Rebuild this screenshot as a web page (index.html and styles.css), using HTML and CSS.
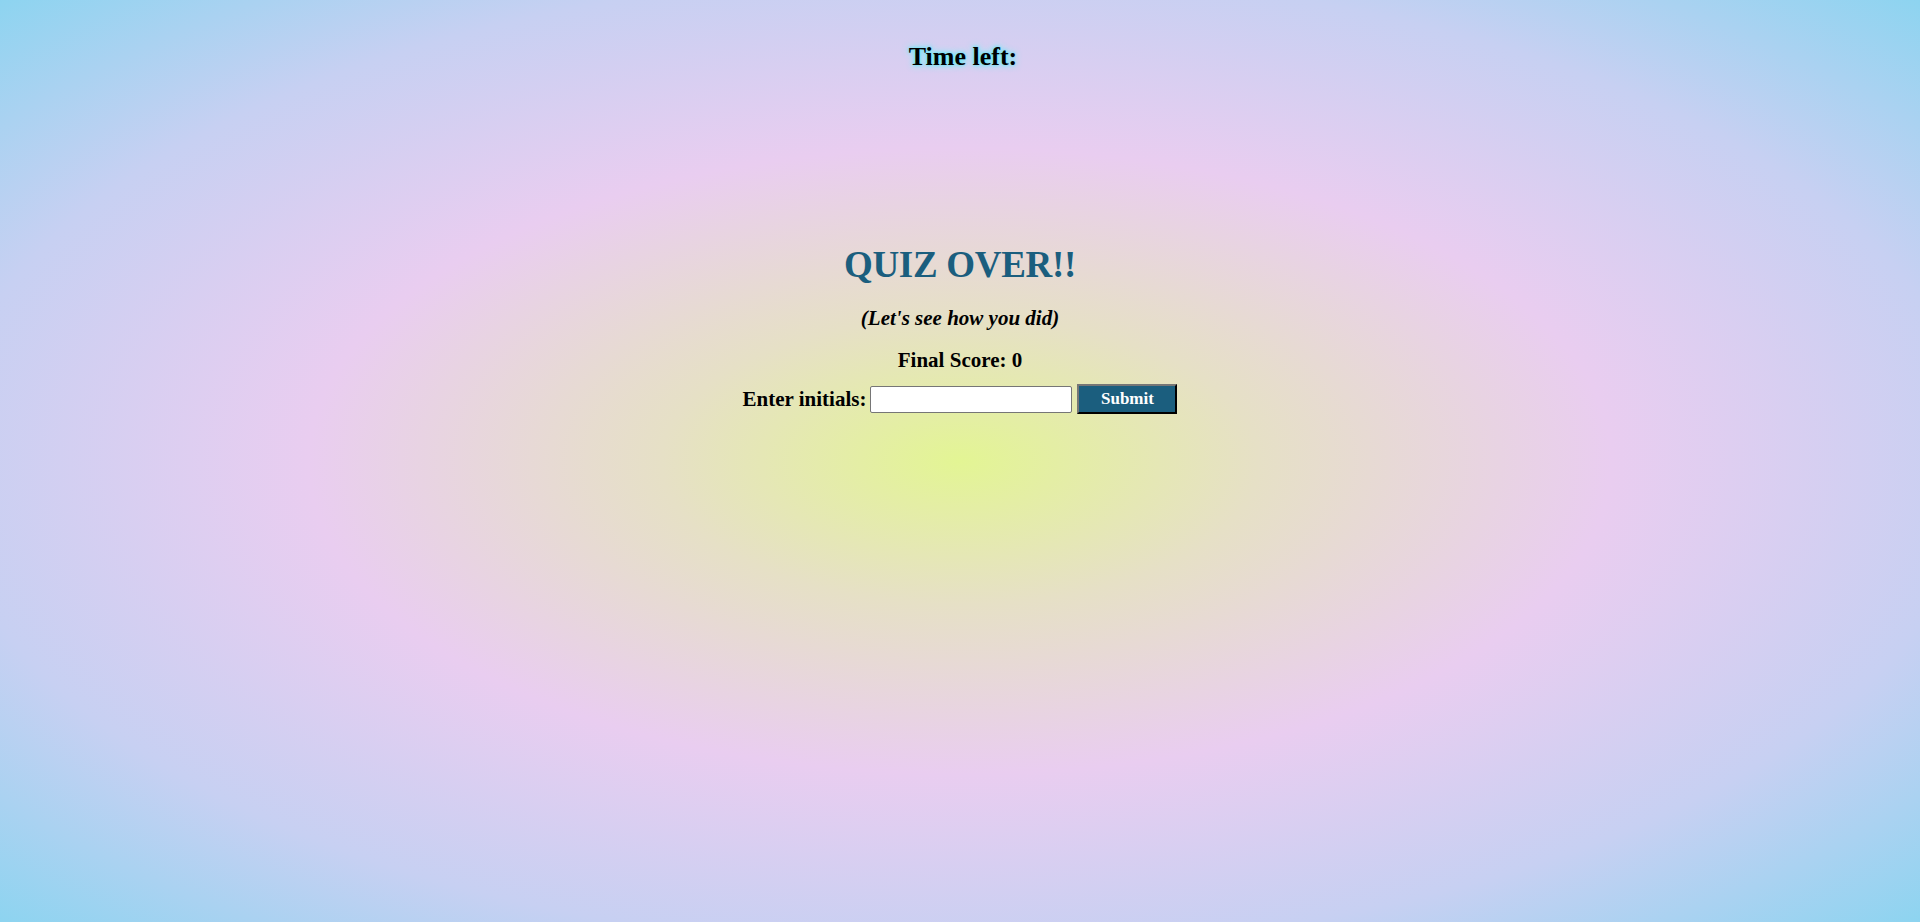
FILE: index.html
```html
<!DOCTYPE html>
<html lang="en">
<head>
<meta charset="utf-8">
<title>Quiz</title>
<link rel="stylesheet" href="styles.css">
</head>
<body>
  <header class="timer">
    <h2 class="timer-text">Time left:</h2>
  </header>
  <main class="end-screen">
    <h1 class="end-title">QUIZ OVER!!</h1>
    <p class="end-sub">(Let's see how you did)</p>
    <p class="final-score">Final Score: 0</p>
    <form class="initials-form">
      <label class="initials-label" for="initials">Enter initials:</label>
      <input class="initials-input" id="initials" type="text">
      <button class="submit-btn" type="button">Submit</button>
    </form>
  </main>
</body>
</html>
```
FILE: styles.css
```css
html, body {
  margin: 0;
  padding: 0;
}
body {
  min-height: 100vh;
  font-family: "Liberation Serif", serif;
  color: #000;
  background: radial-gradient(ellipse at center, #e3f594 0%, #e6e0c6 22%, #e9cdf0 48%, #c7d0f2 75%, #8dd4f0 100%);
  display: flex;
  flex-direction: column;
  align-items: center;
}
.timer {
  padding-top: 42px;
  padding-left: 6px;
  text-align: center;
}
.timer-text {
  margin: 0;
  font-size: 26px;
  font-weight: bold;
  text-shadow: 0 0 3px #4ee6f6, 0 0 6px #6feaf6, 0 0 8px #9af0f8;
}
.end-screen {
  margin-top: 171px;
  display: flex;
  flex-direction: column;
  align-items: center;
}
.end-title {
  margin: 0;
  font-size: 37px;
  font-weight: bold;
  color: #1b5e7e;
  letter-spacing: -0.3px;
}
.end-sub {
  margin: 20px 0 0;
  font-size: 21px;
  font-weight: bold;
  font-style: italic;
}
.final-score {
  margin: 17px 0 0;
  font-size: 21px;
  font-weight: bold;
}
.initials-form {
  margin-top: 11px;
  display: flex;
  align-items: center;
  gap: 4px;
}
.initials-label {
  font-size: 21px;
  font-weight: bold;
}
.initials-input {
  width: 196px;
  height: 25px;
  padding: 0 2px;
  margin: 0;
  border: 1px solid #767676;
  border-radius: 2px;
  background: #fff;
  font-family: inherit;
}
.submit-btn {
  width: 100px;
  height: 30px;
  margin-left: 1px;
  background: #1b5e7e;
  color: #fff;
  border: 2px outset #767676;
  border-right-color: #222;
  border-bottom-color: #222;
  font-family: inherit;
  font-size: 17px;
  font-weight: bold;
}
```
